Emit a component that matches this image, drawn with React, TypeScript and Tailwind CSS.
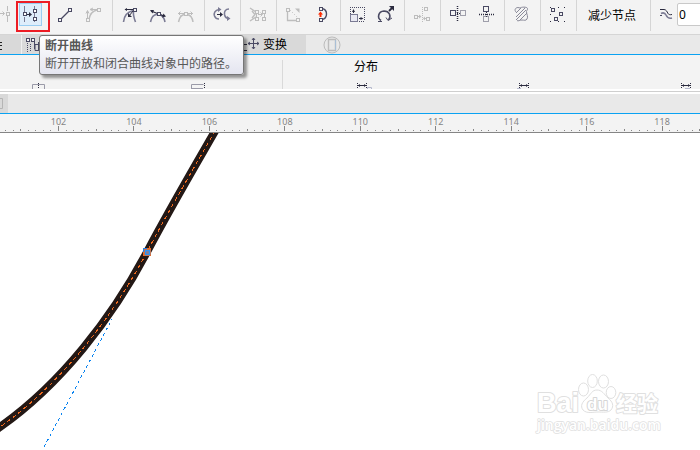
import type { ReactNode } from "react";

const DARK = "#4a4a63";
const SOFT = "#7b7b94";
const INK = "#2b2b3f";
const FADED = "#bdbdbd";

function Icon({ children, color = DARK }: { children: ReactNode; color?: string }) {
    return (
        <svg width="20" height="20" viewBox="0 0 20 20" fill="none" stroke={color} className="shrink-0">
            {children}
        </svg>
    );
}

function Node({ x, y, s = 3, fill = "#f3f3f3" }: { x: number; y: number; s?: number; fill?: string }) {
    return <rect x={x + 0.5} y={y + 0.5} width={s} height={s} fill={fill} />;
}

function ToolButton({ label, children }: { label: string; children: ReactNode }) {
    return (
        <button type="button" aria-label={label} className="flex h-[30px] w-7 shrink-0 items-center justify-center">
            {children}
        </button>
    );
}

function Group({ children }: { children: ReactNode }) {
    return <div className="flex h-[31px] shrink-0 border-l border-[#d5d5d5] pr-1 pl-[3px]">{children}</div>;
}

function Toolbar() {
    return (
        <div className="flex h-[34px] shrink-0 items-start overflow-hidden bg-[#f3f3f3]">
            <div className="flex h-[34px] shrink-0 pr-1">
                <button type="button" aria-label="连接节点" className="flex h-[30px] w-4 items-center">
                    <svg width="10" height="20" viewBox="0 0 10 20" fill="none" stroke={FADED}>
                        <path d="M0 8.5h4M2.5 6.5l2 2-2 2M7.5 1v5M7.5 11v6" />
                        <Node x={6} y={7} />
                    </svg>
                </button>
                <div className="mt-px mr-[2px] h-[31px] w-[34px] shrink-0 border-2 border-[#ed1c24] pl-px">
                    <button type="button" aria-label="断开曲线" className="flex h-[23px] w-[23px] items-center justify-center border border-[#99cdf2] bg-[#deedfb]">
                        <Icon>
                            <path d="M3.5 1v6M3.5 12v5M13.5 1v3M13.5 8v4M13.5 16v1" stroke={SOFT} />
                            <Node x={2} y={7} fill="#fff" />
                            <Node x={12} y={4} fill="#fff" />
                            <Node x={12} y={12} fill="#fff" />
                            <path d="M6 9.5h4" stroke={INK} />
                            <path d="M8 7l3 2.500L8 12z" fill={INK} stroke="none" />
                        </Icon>
                    </button>
                </div>
                <ToolButton label="转换为线条">
                    <Icon>
                        <path d="M5 14L13 6" strokeWidth="1.2" />
                        <Node x={2} y={13} />
                        <Node x={12} y={3} />
                    </Icon>
                </ToolButton>
                <ToolButton label="转换为曲线">
                    <Icon color={FADED}>
                        <path d="M3.500 13V6M2 8.500l1.500-3 1.500 3M13 4.500H7M9 3L6 4.500l3 1.500" />
                        <path d="M5 14C6 9 9 6 13 5" strokeWidth="1.500" />
                        <Node x={2} y={13} />
                        <Node x={13} y={3} />
                    </Icon>
                </ToolButton>
            </div>
            <Group>
                <ToolButton label="尖突节点">
                    <Icon>
                        <path d="M3.500 17C4 11 7 7 13 5.500" stroke={SOFT} strokeWidth="1.600" />
                        <path d="M13.500 7C13 10 14 13 15.500 17" stroke={SOFT} strokeWidth="1.600" />
                        <path d="M5 4.500h8M13 6L9 11" stroke={INK} />
                        <path d="M7 3L4.500 4.500 7 6zM8 8v4h4z" fill={INK} stroke="none" />
                        <Node x={13} y={3} />
                    </Icon>
                </ToolButton>
                <ToolButton label="平滑节点">
                    <Icon>
                        <path d="M2.500 17C3.500 12 6 9.500 9 9.500M12 9.500C15 11 16.500 14 17 17" stroke={SOFT} strokeWidth="1.600" />
                        <path d="M3 6L16 11" stroke={INK} strokeWidth="1.300" />
                        <path d="M2 5l4 0-1.500 3.500zM18 11.500l-4 1 1.500-4z" fill={INK} stroke="none" />
                        <Node x={9} y={7} />
                    </Icon>
                </ToolButton>
                <ToolButton label="对称节点">
                    <Icon color={FADED}>
                        <path d="M2.500 17C3.500 12 6 9.500 9 9.500M11 9.500C14 10 16.500 13 17 17" strokeWidth="1.500" />
                        <path d="M2 8.500h15M4.500 6.500l-2 2 2 2M14.500 6.500l2 2-2 2" />
                        <Node x={8} y={7} />
                    </Icon>
                </ToolButton>
            </Group>
            <Group>
                <ToolButton label="反转方向">
                    <Icon color={SOFT}>
                        <path d="M7 4.500C3 5 1.500 8 2.500 11c.800 2 2.500 3 4.500 3" strokeWidth="1.600" />
                        <path d="M17 4C13.500 4 12 6.500 12.500 9.500c.500 2.500 2 4 4.500 4" strokeWidth="1.600" />
                        <path d="M6 2l3.500 2.500L6 7zM15 11l3.500 2.500L15 16z" fill={SOFT} stroke="none" />
                        <path d="M5 9.500h4" stroke={INK} />
                        <path d="M8 7l3 2.500L8 12z" fill={INK} stroke="none" />
                    </Icon>
                </ToolButton>
            </Group>
            <Group>
                <ToolButton label="提取子路径">
                    <Icon color={FADED}>
                        <path d="M2 3l6 4M2 16l6-4M4 6l3 3.500L4 13" strokeWidth="1.400" />
                        <path d="M8.500 8v4M16.500 8v4M10 9.500h4M12.500 7.500l2 2-2 2" />
                        <Node x={7} y={5} />
                        <Node x={7} y={12} />
                        <Node x={14} y={5} />
                        <Node x={14} y={12} />
                    </Icon>
                </ToolButton>
            </Group>
            <Group>
                <ToolButton label="延长曲线使之闭合">
                    <Icon color={FADED}>
                        <path d="M3.500 7v8.500H12" strokeWidth="1.300" />
                        <path d="M6 5l8 8" strokeDasharray="1 2" />
                        <path d="M11 3.500h4.500V8z" fill={FADED} stroke="none" />
                        <Node x={2} y={3} />
                        <Node x={12} y={13} />
                    </Icon>
                </ToolButton>
                <ToolButton label="闭合曲线">
                    <Icon>
                        <path d="M10 3.500C13 4 14.500 6 14.500 9s-1.500 5-4.500 5.500" strokeWidth="1.400" />
                        <path d="M6 9.500l2.500-3L11 9.500H9.500v2.500h-2V9.500z" fill="#ff2a00" stroke="none" />
                        <Node x={7} y={2} />
                        <Node x={7} y={13} />
                    </Icon>
                </ToolButton>
            </Group>
            <Group>
                <ToolButton label="延展与缩放节点">
                    <Icon>
                        <path d="M2 2.500h15M16.500 2v14M2.500 2v8M11 16.500h6" strokeDasharray="1 1" />
                        <rect x="2.500" y="9.500" width="7" height="7" fill="#e9e9f2" stroke={SOFT} />
                        <path d="M5.500 8V5M11 13.500h3" stroke={INK} />
                        <path d="M4 7l1.500-3L7 7zM12.500 12l3 1.500-3 1.500z" fill={INK} stroke="none" />
                    </Icon>
                </ToolButton>
                <ToolButton label="旋转与倾斜节点">
                    <Icon>
                        <path d="M5 15.500C1 13 2 6.500 8 6c5.500 0 7.500 5 4.500 9" strokeWidth="1.600" />
                        <path d="M10 12.500l2 3 4-2.500M2 16.500h4" />
                        <path d="M13 6l3-3" stroke={INK} strokeWidth="1.800" />
                        <path d="M13 1h5v5z" fill={INK} stroke="none" />
                    </Icon>
                </ToolButton>
            </Group>
            <Group>
                <ToolButton label="对齐节点">
                    <Icon color={FADED}>
                        <path d="M10.500 2v16" strokeDasharray="1 1" />
                        <path d="M6 11.500h3M12 13.500h2" />
                        <path d="M7 9.500l2.500 2L7 13.500zM13 11.500l-2 2 2 2z" fill={FADED} stroke="none" />
                        <Node x={12} y={2} />
                        <Node x={2} y={10} />
                        <Node x={14} y={12} />
                    </Icon>
                </ToolButton>
            </Group>
            <Group>
                <ToolButton label="水平反射节点">
                    <Icon>
                        <path d="M9.500 1v16" stroke={INK} strokeDasharray="1 1" strokeWidth="1.500" />
                        <path d="M7 8.500h5" stroke={INK} strokeDasharray="1 1" />
                        <Node x={2} y={5} s={5} />
                        <rect x="12.500" y="5.500" width="5" height="5" strokeDasharray="1 1" />
                    </Icon>
                </ToolButton>
                <ToolButton label="垂直反射节点">
                    <Icon>
                        <path d="M3 9.500h16" stroke={INK} strokeDasharray="1 1" strokeWidth="1.500" />
                        <path d="M10.500 7v5" stroke={INK} strokeDasharray="1 1" />
                        <Node x={7} y={1} s={5} />
                        <rect x="7.500" y="11.500" width="5" height="5" strokeDasharray="1 1" />
                    </Icon>
                </ToolButton>
            </Group>
            <Group>
                <ToolButton label="弹性模式">
                    <Icon color="#8a8a99">
                        <path d="M4 7c-2-2-.500-4.500 2-4.500L8 3c1-1 7-1.500 7.500.500.500 1-1 2-1 3 0 3 2 5 .500 7.500-1 2-3 1-5 1-2 0-4 1.500-5 .500" />
                        <path d="M4 8l5-5M4 12l9-9M4 15l10-10M8 15l7-7" />
                    </Icon>
                </ToolButton>
            </Group>
            <Group>
                <ToolButton label="选择所有节点">
                    <Icon>
                        <path d="M2 2.500h1M10 2.500h1M16 2.500h1M2 9.500h1M2 16.500h1M10 16.500h1M16 16.500h1" stroke={INK} />
                        <Node x={3} y={3} />
                        <Node x={11} y={7} />
                        <Node x={6} y={12} />
                    </Icon>
                </ToolButton>
            </Group>
            <div className="flex h-[31px] shrink-0 items-center border-l border-[#d5d5d5] pr-[13px] pl-[11px]">
                <button type="button" className="w-[49px] text-left text-[12px] leading-4 whitespace-nowrap text-black">减少节点</button>
            </div>
            <div className="flex h-[31px] shrink-0 border-l border-[#d5d5d5] pl-[5px]">
                <label htmlFor="smooth" aria-label="曲线平滑度" className="flex h-[30px] w-[21px] items-center">
                    <Icon>
                        <path d="M4 4.500h4c2 0 3 2 4 4 .500 1 2 1.500 4 1" stroke={INK} />
                        <path d="M5 8.500c2-1 4-.500 5 1.500s3 4 6 3" stroke={SOFT} strokeWidth="1.600" />
                        <path d="M4 10.500h2" />
                    </Icon>
                </label>
                <input
                    id="smooth"
                    defaultValue="0"
                    className="mt-[3px] h-[23px] w-14 rounded-xs border border-[#c9c9c9] bg-white px-px text-[12px] text-black"
                />
            </div>
        </div>
    );
}

function TabBar() {
    return (
        <div className="flex h-[21px] shrink-0 items-stretch border-t border-b border-t-[#d5d5d5] border-b-[#0aa2f2] bg-[#e9e9e9] text-[12px] leading-4 text-black">
            <div className="flex w-[306px] shrink-0 items-center bg-[#d9d9d9]">
                <div className="flex w-[22px] items-center self-stretch overflow-hidden border-r border-[#f0f0f0]">
                    <svg width="2" height="12" viewBox="0 0 2 12" stroke="#222" fill="none">
                        <path d="M0 3.500h2M0 6.500h2M0 10.500h2" />
                    </svg>
                </div>
                <svg width="18" height="16" viewBox="0 0 18 16" fill="none" stroke={DARK} className="ml-1">
                    <path d="M1.500 6v9M5 2.500h4M4.500 7v8" strokeDasharray="1 1" />
                    <Node x={0} y={1} />
                    <Node x={5} y={1} />
                    <path d="M8.500 1v11M12.500 5v9M9 7.500h4v6H9z" />
                </svg>
                <button type="button" className="ml-auto flex items-center gap-1 pr-[19px]">
                    <svg width="16" height="16" viewBox="0 0 16 16" fill="none" stroke={DARK}>
                        <path d="M10.500 1v11M5 6.500h11M9 3l1.500-2L12 3M9 10l1.500 2 1.500-2M7 5L5 6.500 7 8M14 5l2 1.500L14 8" />
                        <path d="M0 7.500h4M0 13.500h4" stroke={INK} />
                    </svg>
                    变换
                </button>
            </div>
            <button type="button" aria-label="添加" className="ml-[17px] flex items-center">
                <svg width="18" height="18" viewBox="0 0 18 18" fill="none" stroke="#bcbcbc">
                    <circle cx="9" cy="9" r="8" />
                    <path d="M5.500 3.500h7v11h-7z" strokeWidth="1.400" />
                    <path d="M12.500 4v10" stroke="#a9bfd6" />
                </svg>
            </button>
        </div>
    );
}

function Spread({ x }: { x: number }) {
    return (
        <g stroke={INK} fill={INK}>
            <path d={`M${x + 0.5} 0v5M${x + 9.5} 0v5`} strokeDasharray="1 1" />
            <path d={`M${x + 1} 2.500h8`} />
            <path d={`M${x + 1} 2.500l2-1.500v3zM${x + 9} 2.500l-2-1.500v3z`} stroke="none" />
        </g>
    );
}

function OptionsPanel() {
    return (
        <div className="flex h-[34px] shrink-0 bg-[#f3f3f3] pt-[5px]">
            <div className="flex w-[283px] shrink-0 items-end border-r border-[#d9d9d9]">
                <svg width="210" height="6" viewBox="0 0 210 6" fill="none" stroke="#9a9aa8">
                    <path d="M32.500 6V1.500h12V6M191.500 6V1.500h12M191 5.500h12" />
                    <path d="M38.500 0v6M204.500 0v6" stroke={INK} strokeDasharray="1 1" />
                </svg>
            </div>
            <div className="flex min-w-0 flex-1 flex-col justify-between pl-[71px]">
                <span className="text-[12px] leading-[14px] text-black">分布</span>
                <svg width="346" height="6" viewBox="0 0 346 6" fill="none" className="shrink-0">
                    <Spread x={3} />
                    <path d="M13.500 6V4.500h4V6M163 5.500h4M331 5.500h5" stroke="#b5b8cc" />
                    <Spread x={165} />
                    <Spread x={327} />
                </svg>
            </div>
        </div>
    );
}

function DocumentTabs() {
    return (
        <div className="flex h-5 shrink-0 border-b border-[#0aa2f2] bg-[#e9e9e9]">
            <button type="button" aria-label="文档" className="flex w-2 items-center bg-[#d9d9d9]">
                <svg width="4" height="12" viewBox="0 0 4 12" fill="none" stroke="#b5b5b5">
                    <path d="M0 .5h2.500v10H0" />
                </svg>
            </button>
        </div>
    );
}

const RULER_START = 58.5;
const RULER_STEP = 75.45;
const rulerMarks = [
    { label: "" },
    { label: "102" },
    { label: "104" },
    { label: "106" },
    { label: "108" },
    { label: "110" },
    { label: "112" },
    { label: "114" },
    { label: "116" },
    { label: "118" },
];

function Ruler() {
    return (
        <svg width="100%" height="19" className="block shrink-0 bg-[#f3f3f3]" shapeRendering="crispEdges">
            {rulerMarks.map((mark, i) => {
                const left = RULER_START + (i - 1) * RULER_STEP;
                return (
                    <g key={i} fill="#858585">
                        {mark.label && (
                            <text x={left} y="11" textAnchor="middle" fontSize="9">
                                {mark.label}
                            </text>
                        )}
                        {Array.from({ length: 10 }, (_, k) => {
                            const h = k === 0 ? 5 : k === 5 ? 2 : 1;
                            return (
                                <rect key={k} x={Math.floor(left + (k * RULER_STEP) / 10)} y={17 - h} width="1" height={h} />
                            );
                        })}
                    </g>
                );
            })}
            <rect x="0" y="18" width="100%" height="1" fill="#858585" />
        </svg>
    );
}

const CURVE = "M-10 301C-7 299 -4 297 0 294C61 251 112 185 147 119C168 79 188 45 218 -7";

function Canvas() {
    return (
        <div className="relative min-h-0 flex-1 overflow-hidden bg-white">
            <svg width="240" height="317" viewBox="0 0 240 317" fill="none">
                <path d={CURVE} stroke="#231815" strokeWidth="8" />
                <path d={CURVE} stroke="#ee6a1f" strokeDasharray="4 3" shapeRendering="crispEdges" />
                <path d="M44 314L112 186" stroke="#0a84f0" strokeDasharray="3 3" shapeRendering="crispEdges" />
                <path d="M143 115h8v8h-8z" fill="#ee6a1f" />
                <path d="M143.500 119v-3.500h3.500" stroke="#1a7ff0" />
                <rect x="145.500" y="117.500" width="4" height="4" stroke="#2a93f5" strokeWidth="1.500" fill="#9a7a80" />
            </svg>
            <svg
                width="130"
                height="66"
                viewBox="0 0 130 66"
                fill="#fff"
                stroke="#e0e0e0"
                className="absolute right-[36px] bottom-[12px]"
            >
                <ellipse cx="49.500" cy="17.500" rx="5" ry="6.500" />
                <ellipse cx="58.500" cy="9" rx="4.800" ry="6.500" />
                <ellipse cx="69.500" cy="9.500" rx="5" ry="6.500" />
                <ellipse cx="77" cy="20.500" rx="4.800" ry="6" />
                <path d="M63 18c5 0 7 4 11 8 5 4 6 8 3 12-3 3-8 2-13 2s-11 2-15-2c-3-4-1-8 4-12 4-4 5-8 10-8z" />
                <g fontWeight="700" strokeWidth="2" paintOrder="stroke" strokeLinejoin="round">
                    <text x="3" y="40" fontSize="27" fontFamily="Liberation Sans">Bai</text>
                    <text x="53" y="38" fontSize="17" stroke="#d6d6d6" fontFamily="Liberation Sans">du</text>
                    <text x="82" y="39" fontSize="21" fontFamily="Noto Sans CJK SC">经验</text>
                    <text x="3" y="58" fontSize="14" fontWeight="600" strokeWidth="1.500" fontFamily="Open Sans">jingyan.baidu.com</text>
                </g>
            </svg>
        </div>
    );
}

function Tooltip() {
    return (
        <div
            role="tooltip"
            className="absolute top-[35px] left-[39px] rounded-[3px] border border-[#767676] bg-linear-to-b from-white to-[#e4e5f0] px-[5px] py-px text-[12px] leading-[18px] whitespace-nowrap text-[#575757] shadow-[3px_3px_3px_rgba(0,0,0,0.4)]"
        >
            <p className="font-bold">断开曲线</p>
            <p className="w-[193px]">断开开放和闭合曲线对象中的路径。</p>
        </div>
    );
}

export default function App() {
    return (
        <div className="relative flex h-screen flex-col overflow-hidden bg-white font-['Noto_Sans','Noto_Sans_CJK_SC',sans-serif]">
            <Toolbar />
            <TabBar />
            <OptionsPanel />
            <div className="my-[2px] h-px shrink-0 bg-[#cfcfcf]" />
            <DocumentTabs />
            <Ruler />
            <Canvas />
            <Tooltip />
        </div>
    );
}
